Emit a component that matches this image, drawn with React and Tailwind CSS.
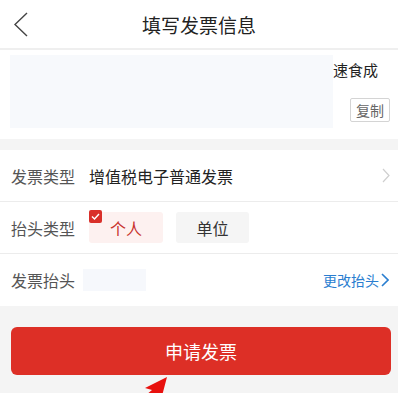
export default function App() {
  const font = { fontFamily: '"Noto Sans CJK SC", "Noto Sans", sans-serif' };
  return (
    <div className="relative w-[398px] h-[393px] overflow-hidden bg-[#f4f4f4]" style={font}>
      {/* Header */}
      <div className="relative h-[50px] bg-white flex items-center justify-center border-b-2 border-[#efefef]">
        <svg className="absolute left-[13px] top-[12px]" width="16" height="25" viewBox="0 0 16 25">
          <polyline points="14,1 2,12.5 14,24" fill="none" stroke="#444" strokeWidth="1.4" />
        </svg>
        <span className="text-[19px] text-[#222] leading-none">填写发票信息</span>
      </div>

      {/* Info card */}
      <div className="flex bg-white h-[89px]">
        <div className="ml-[10px] mt-[5px] w-[323px] h-[73px] bg-[#f7f9fc]" />
        <div className="flex-1 flex flex-col items-end pr-[8px]">
          <div className="w-full text-[15px] text-[#222] leading-none mt-[12px]">速食成</div>
          <div className="mt-[21px] w-[40px] h-[24px] border border-[#d4d4d4] rounded-[2px] flex items-center justify-center text-[14px] text-[#666] leading-none">复制</div>
        </div>
      </div>

      {/* Form rows */}
      <div className="mt-[11px] bg-white">
        <div className="h-[52px] flex items-center pl-[11px] pr-[8px] border-b border-[#ececec]">
          <span className="w-[78px] text-[16px] text-[#555] leading-none">发票类型</span>
          <span className="flex-1 text-[16px] text-[#222] leading-none">增值税电子普通发票</span>
          <svg width="8" height="15" viewBox="0 0 8 15">
            <polyline points="1,1 7,7.5 1,14" fill="none" stroke="#cfcfcf" strokeWidth="1.2" />
          </svg>
        </div>
        <div className="h-[52px] flex items-center pl-[11px] pr-[8px] border-b border-[#ececec]">
          <span className="w-[78px] text-[16px] text-[#555] leading-none">抬头类型</span>
          <div className="relative w-[74px] h-[31px] bg-[#fdf1f0] rounded-[3px] flex items-center justify-center text-[16px] text-[#c8332d] leading-none">
            <div className="absolute left-0 top-[-2px] w-[13px] h-[13px] bg-[#d9302a] rounded-[2px] flex items-center justify-center">
              <svg width="9" height="7" viewBox="0 0 9 7">
                <polyline points="1,3.5 3.5,6 8,1" fill="none" stroke="#fff" strokeWidth="1.4" />
              </svg>
            </div>
            个人
          </div>
          <div className="ml-[13px] w-[73px] h-[31px] bg-[#f5f5f5] rounded-[3px] flex items-center justify-center text-[16px] text-[#333] leading-none">单位</div>
        </div>
        <div className="h-[52px] flex items-center pl-[11px] pr-[9px]">
          <span className="w-[72px] text-[16px] text-[#555] leading-none">发票抬头</span>
          <div className="w-[63px] h-[22px] bg-[#f6f8fc]" />
          <div className="flex-1" />
          <span className="text-[14px] text-[#2a7ed0] leading-none">更改抬头</span>
          <svg className="ml-[2px]" width="8" height="14" viewBox="0 0 8 14">
            <polyline points="1,1 7,7 1,13" fill="none" stroke="#2a7ed0" strokeWidth="1.6" />
          </svg>
        </div>
      </div>

      {/* Button */}
      <div className="ml-[11px] mr-[7px] mt-[21px]">
        <div className="h-[48px] bg-[#dd2f26] rounded-[6px] flex items-center justify-center text-[18px] text-white leading-none">申请发票</div>
      </div>

      {/* Red arrow annotation */}
      <svg className="absolute left-0 top-0" width="398" height="393" viewBox="0 0 398 393">
        <polygon points="167,377 145,388 152,390 140,400 150,404 158,394 162,396" fill="#e8110e" />
      </svg>
    </div>
  );
}
